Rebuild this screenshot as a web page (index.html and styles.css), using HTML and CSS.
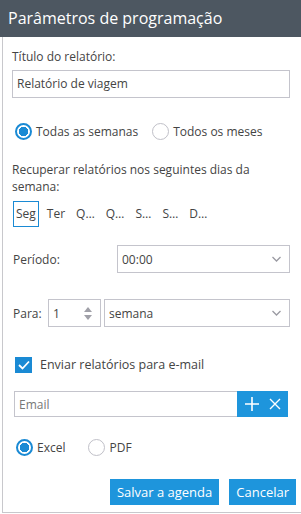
FILE: index.html
```html
<!DOCTYPE html>
<html lang="pt">
<head>
  <meta charset="UTF-8" />
  <meta name="viewport" content="width=device-width, initial-scale=1.0" />
  <title>Parâmetros de programação</title>
  <link rel="stylesheet" href="styles.css">
</head>
<body>
  <div class="dialog">
    <div class="dialog-header">Parâmetros de programação</div>
    <div class="dialog-body">
      <div class="field-label">Título do relatório:</div>
      <div class="text-input">Relatório de viagem</div>

      <div class="radio-row first">
        <label class="radio checked"><span class="dot"></span>Todas as semanas</label>
        <label class="radio"><span class="dot"></span>Todos os meses</label>
      </div>

      <p class="days-hint">Recuperar relatórios nos seguintes dias da semana:</p>
      <div class="days">
        <span class="day selected">Seg</span>
        <span class="day">Ter</span>
        <span class="day">Q…</span>
        <span class="day">Q…</span>
        <span class="day">S…</span>
        <span class="day">S…</span>
        <span class="day">D…</span>
      </div>

      <div class="form-row period">
        <span class="row-label">Período:</span>
        <div class="select period-select">
          <span>00:00</span>
          <svg class="chevron" width="9" height="6" viewBox="0 0 9 6"><path d="M0.5 1l4 4 4-4" fill="none" stroke="#9a9aa2" stroke-width="1.3"/></svg>
        </div>
      </div>

      <div class="form-row until">
        <span class="row-label">Para:</span>
        <div class="spinner">
          <span>1</span>
          <span class="arrows">
            <svg width="8" height="5" viewBox="0 0 8 5"><path d="M0 5L4 0l4 5z" fill="#a0a0a8"/></svg>
            <svg width="8" height="5" viewBox="0 0 8 5"><path d="M0 0h8L4 5z" fill="#a0a0a8"/></svg>
          </span>
        </div>
        <div class="select unit-select">
          <span>semana</span>
          <svg class="chevron" width="9" height="6" viewBox="0 0 9 6"><path d="M0.5 1l4 4 4-4" fill="none" stroke="#9a9aa2" stroke-width="1.3"/></svg>
        </div>
      </div>

      <label class="check">
        <span class="box">
          <svg width="12" height="10" viewBox="0 0 12 10"><path d="M1 5l3.5 3.5L11 1.5" fill="none" stroke="#fff" stroke-width="1.8"/></svg>
        </span>
        Enviar relatórios para e-mail
      </label>

      <div class="email-box">
        <span class="placeholder">Email</span>
        <span class="email-actions">
          <svg width="14" height="14" viewBox="0 0 14 14"><path d="M7 0v14M0 7h14" stroke="#fff" stroke-width="1.6"/></svg>
          <svg width="12" height="12" viewBox="0 0 12 12"><path d="M1 1l10 10M11 1L1 11" stroke="#fff" stroke-width="1.4"/></svg>
        </span>
      </div>

      <div class="radio-row format">
        <label class="radio checked"><span class="dot"></span>Excel</label>
        <label class="radio"><span class="dot"></span>PDF</label>
      </div>

      <div class="actions">
        <button class="button">Salvar a agenda</button>
        <button class="button">Cancelar</button>
      </div>
    </div>
  </div>
</body>
</html>
```

FILE: styles.css
```css
body {
  margin: 0;
  font-family: 'Open Sans', Arial, sans-serif;
  font-size: 12px;
  color: #444;
  background-color: #fff;
}

.dialog {
  width: 301px;
}

.dialog-header {
  height: 37px;
  line-height: 36px;
  background-color: #4d5761;
  color: #fff;
  font-size: 16px;
  padding-left: 8px;
  box-sizing: border-box;
}

.dialog-body {
  margin-left: 2px;
  border-left: 1px solid #c8c8cc;
  border-bottom: 1px solid #c8c8cc;
  padding: 11px 0 7px 9px;
}

.field-label {
  line-height: 18px;
  margin-bottom: 4px;
}

.text-input {
  width: 278px;
  height: 28px;
  box-sizing: border-box;
  border: 1px solid #c4c4cc;
  padding-left: 4px;
  line-height: 26px;
}

.radio-row {
  display: flex;
  align-items: center;
  height: 22px;
}

.radio-row.first {
  margin-top: 22px;
  padding-left: 3px;
  gap: 14px;
}

.radio-row.format {
  margin-top: 19px;
  padding-left: 4px;
  gap: 23px;
}

.radio {
  display: flex;
  align-items: center;
  gap: 4px;
}

.dot {
  width: 17px;
  height: 17px;
  box-sizing: border-box;
  border: 1px solid #c0c0c8;
  border-radius: 50%;
}

.radio.checked .dot {
  border: 2px solid #1a8ad4;
  background: radial-gradient(circle, #1a8ad4 0 4.5px, #fff 5px);
}

.days-hint {
  margin: 19px 0 0;
  line-height: 17px;
  width: 262px;
}

.days {
  display: flex;
  margin-top: 6px;
  margin-left: 1px;
  gap: 5px;
}

.day {
  height: 26px;
  line-height: 24px;
  box-sizing: border-box;
  border: 1px solid transparent;
  padding: 0 2px;
}

.day.selected {
  border-color: #1a8ad4;
  min-width: 25px;
}

.form-row {
  display: flex;
  align-items: center;
  height: 28px;
}

.form-row.period {
  margin-top: 18px;
}

.form-row.until {
  margin-top: 26px;
  gap: 3px;
}

.row-label {
  padding-left: 1px;
}

.period .row-label {
  width: 104px;
}

.until .row-label {
  width: 32px;
}

.select,
.spinner {
  height: 28px;
  box-sizing: border-box;
  border: 1px solid #c4c4cc;
  display: flex;
  align-items: center;
  justify-content: space-between;
  padding: 0 8px 0 4px;
}

.period-select {
  width: 173px;
}

.unit-select {
  width: 186px;
}

.spinner {
  width: 53px;
  padding-right: 8px;
}

.arrows {
  display: flex;
  flex-direction: column;
  gap: 3px;
}

.arrows svg {
  display: block;
}

.check {
  display: flex;
  align-items: center;
  gap: 8px;
  margin-top: 29px;
  margin-left: 3px;
  height: 17px;
  font-size: 12.5px;
}

.box {
  width: 17px;
  height: 16px;
  background-color: #1a8ad4;
  display: flex;
  align-items: center;
  justify-content: center;
}

.email-box {
  margin-top: 18px;
  margin-left: 2px;
  width: 274px;
  height: 26px;
  box-sizing: border-box;
  border: 1px solid #c4c4cc;
  display: flex;
  align-items: center;
  justify-content: space-between;
}

.placeholder {
  padding-left: 4px;
  color: #777;
}

.email-actions {
  height: 26px;
  width: 51px;
  margin: -1px -1px 0 0;
  background-color: #1e95dc;
  display: flex;
  align-items: center;
  justify-content: center;
  gap: 10px;
}

.actions {
  display: flex;
  justify-content: flex-end;
  gap: 10px;
  margin-top: 21px;
  padding-right: 5px;
}

.button {
  height: 26px;
  padding: 0 7px;
  background-color: #1e95dc;
  color: #fff;
  border: none;
  font-family: 'Open Sans', Arial, sans-serif;
  font-size: 13px;
  cursor: pointer;
}
```
